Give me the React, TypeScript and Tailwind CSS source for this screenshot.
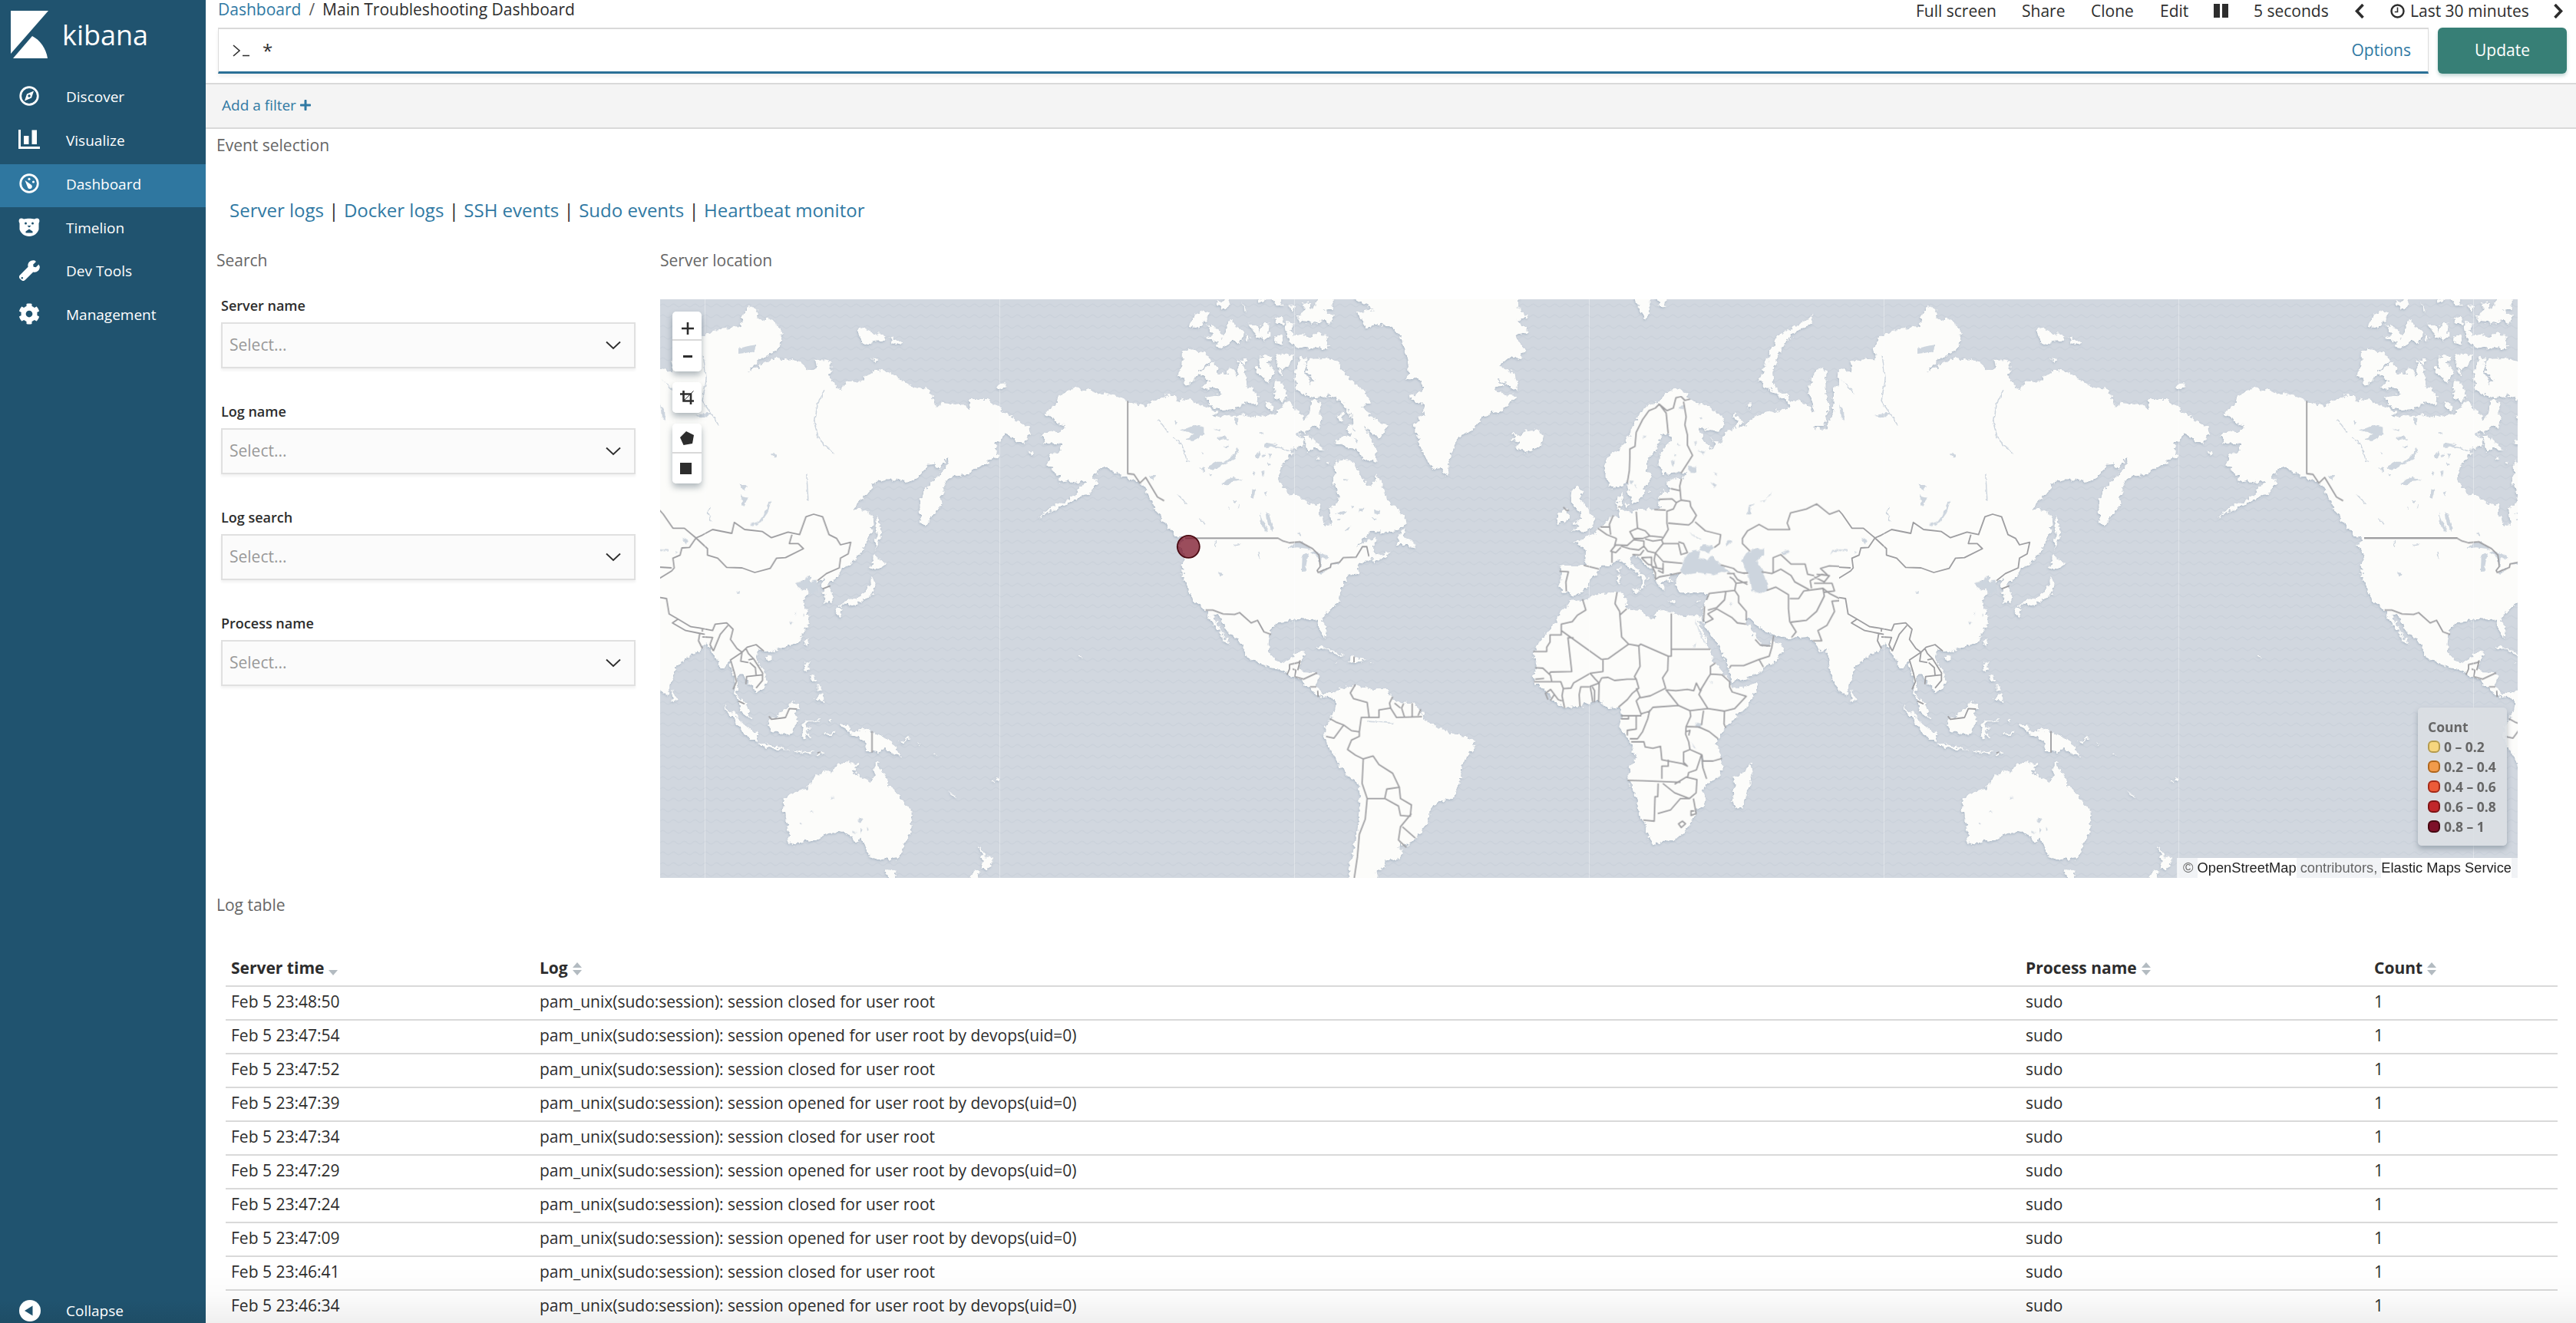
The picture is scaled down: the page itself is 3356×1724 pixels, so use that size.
import React from "react";
import { FaWrench, FaCog, FaPlus } from "react-icons/fa";

const T_A = "translate(0 -10) scale(0.5102 0.4911)";
const T_B = "translate(740 -10) scale(0.5102 0.4911)";
const T_N = "translate(620 0) scale(0.33333)";
const T_E = "translate(1120 110) scale(0.33333)";
const T_S = "translate(0 250) scale(0.33333)";

type Shape = { t: string; d: string };

/* Coastlines, each group in its own regional coordinate grid */
const LAND: Shape[] = [
  {
    t: T_A,
    d: `M1240,305L1195,290 1170,278 1145,272 1120,270 1100,262 1085,258 1075,265 1062,250 1045,262 1030,270 1015,280 1012,300 1000,312 983,318 990,328 1003,335 1010,350 1030,352 1037,363 1015,372 1000,368 985,375 970,382 985,388 980,402 1000,404 1025,402 1025,420 1015,430 1000,428 992,445 988,460 1003,465 1005,480 1020,488 1020,505 1045,500 1055,510 1075,500 1090,510 1070,520 1060,540 1035,555 1010,565 990,578 965,600 1000,582 1030,567 1060,554 1080,538 1096,535 1110,520 1115,500 1105,490 1120,475 1140,465 1160,480 1185,488 1205,492 1225,505 1240,525 1255,545 1265,565 1275,590 1285,610 1300,630 1320,650 1400,650 1400,340Z
M-40,200L10,205 30,215 30,185 60,178 95,180 88,150 104,120 135,105 163,98 205,92 212,55 235,38 250,55 245,75 290,72 302,95 314,115 305,145 285,165 250,185 225,215 270,187 300,178 330,180 355,185 385,210 400,200 395,178 435,185 440,210 430,225 445,245 460,262 475,240 510,240 530,220 550,205 600,220 615,235 640,250 690,260 698,285 710,310 715,292 770,300 790,310 790,285 835,285 870,310 900,335 945,365 948,378 925,395 935,405 910,395 880,375 870,395 850,400 862,420 860,440 830,455 805,470 785,485 750,490 730,500 725,520 718,545 715,570 700,590 675,625 665,600 663,560 670,535 690,510 715,485 740,450 735,440 710,470 700,457 680,460 660,490 640,505 610,500 560,500 540,520 515,550 495,575 520,580 540,595 542,620 535,650 515,690 490,720 470,732 460,735 455,755 430,775 430,785 443,800 440,820 420,825 420,800 410,785 420,760 400,770 380,775 385,755 365,765 345,780 360,790 385,795 370,810 365,825 378,850 380,880 370,900 355,925 330,940 300,948 270,958 250,950 245,975 265,1005 272,1035 265,1050 245,1065 240,1050 220,1030 205,1015 198,1020 200,1045 190,1060 205,1080 220,1095 230,1125 232,1135 208,1115 200,1085 188,1062 190,1040 185,1015 178,980 165,1000 150,1000 145,975 130,950 118,935 105,950 80,965 60,980 35,1005 30,1035 20,1070 5,1070 -10,1040 -40,1000Z
M32,1060L45,1080 40,1090 30,1085Z M505,100L520,95 545,110 570,112 575,128 550,130 525,145 510,125Z M585,120L620,135 610,142 595,138Z M540,175L560,182 550,190Z M860,245L885,243 880,257 862,255Z
M552,590L560,610 565,650 558,660 550,685 552,640Z M548,700L578,722 555,740 535,735Z M540,755L548,775 540,805 520,818 495,834 470,830 450,840 475,820 510,808 530,790 538,770Z M445,840L465,842 458,862 448,850Z M378,920L375,945 367,935Z M270,970L288,968 278,982Z M370,980L382,985 380,1005 370,1010 368,990Z M400,1075L418,1065 418,1090 392,1085Z M385,1015L400,1030 392,1035Z M404,1040L412,1055 402,1058Z M1068,963L1078,970 1070,974Z M938,424L955,428 950,433Z`,
  },
  {
    t: T_N,
    d: `M-60,400L0,415 30,425 50,410 75,395 100,385 130,370 150,385 170,400 180,380 185,400 205,390 225,400 250,415 275,420 295,430 320,445 300,455 330,460 370,455 395,455 425,450 450,460 490,458 520,455 545,450 560,430 575,410 600,400 620,430 645,445 655,475 675,455 685,400 700,390 725,410 715,435 728,470 720,500 690,500 665,520 630,520 660,545 650,575 615,580 610,605 585,625 568,660 558,690 560,720 580,735 590,765 620,760 650,780 685,800 715,805 720,850 745,885 765,880 755,815 790,795 795,765 775,730 778,690 775,640 800,625 830,625 850,645 870,670 885,700 905,730 930,725 940,685 960,715 975,755 985,790 1020,815 1050,845 1055,880 1030,900 980,910 915,912 885,940 865,970 900,945 940,930 935,950 920,965 940,1000 970,995 1000,985 970,1010 930,1030 925,1015 880,1030 865,1055 868,1070 830,1080 815,1110 800,1130 795,1170 800,1180 765,1205 740,1225 725,1255 740,1285 745,1320 730,1315 715,1290 712,1265 705,1250 680,1250 650,1245 625,1255 600,1255 560,1260 540,1275 525,1290 520,1330 517,1360 530,1395 555,1415 590,1420 605,1410 615,1385 650,1375 660,1385 645,1410 640,1440 650,1455 700,1458 712,1470 705,1510 715,1530 730,1545 760,1535 785,1550 780,1565 755,1550 735,1560 700,1540 680,1520 655,1495 620,1475 590,1465 560,1445 520,1440 460,1415 425,1395 422,1365 395,1330 360,1300 340,1270 325,1235 300,1225 310,1255 325,1285 345,1320 368,1350 345,1335 325,1300 305,1275 290,1250 275,1218 240,1190 225,1180 215,1155 205,1130 190,1105 183,1085 180,1050 190,1000 165,960 185,940 150,910 130,890 110,860 80,830 60,790 40,745 20,720 -10,705 -60,690Z
M180,200L215,195 270,210 295,240 260,265 240,300 200,340 185,310 162,300 178,260Z M245,290L290,250 310,250 320,290 355,290 365,265 385,280 400,310 395,240 420,260 430,300 440,340 480,380 470,410 430,405 400,425 340,435 300,420 270,385 340,370 320,345 265,350 255,340 290,320Z M408,233L430,235 425,260Z M460,265L485,270 480,225 510,220 530,225 515,250 540,280 530,310 510,325 490,300Z M550,215L615,215 600,260 570,275 550,265Z M545,320L570,320 595,380 575,400 540,380Z M555,275L572,280 565,305Z M510,400L540,420 530,432 508,425Z
M270,150L300,140 275,100 310,110 340,150 350,130 370,80 390,110 420,120 415,165 370,165 340,190 310,185 325,170Z M205,105L230,60 270,45 290,50 275,80 240,110 225,110Z M440,95L480,100 480,130 500,90 520,90 520,150 500,165 470,140Z M540,145L565,140 575,180 545,170Z M585,90L620,95 600,120 620,145 650,135 680,150 710,130 745,140 750,190 680,190 620,190 595,165Z M640,85L625,65 660,45 650,20 670,10 690,40 710,0 720,-10 770,-10 770,40 730,45 770,65 760,100 735,80 700,95Z M310,10L335,10 345,-10 355,-10 365,15 350,40 330,35Z M530,-10L570,-10 560,10 580,25 545,25Z M540,65L570,70 580,100 545,90Z M415,15L435,50 425,48Z M470,-5L505,-5 500,12 475,10Z M600,25L618,35 612,48Z M432,140L445,150 438,165Z
M640,230L665,225 660,280 680,330 700,320 670,285 665,250 690,230 740,228 785,238 800,270 830,310 855,330 890,350 915,400 885,420 930,465 985,495 955,545 920,520 890,500 920,545 940,590 940,640 890,620 860,590 820,575 775,560 800,540 840,530 820,510 845,490 840,450 800,400 760,375 700,385 650,370 625,350 620,290Z M665,530L690,545 720,575 740,590 700,585 670,600 660,570Z M785,455L810,445 808,475 790,480Z M700,622L722,612 715,628Z M745,632L757,636 750,642Z
M840,-10L930,40 860,50 900,110 960,95 1000,110 1030,140 1050,190 1065,260 1060,310 1110,310 1120,360 1070,375 1090,405 1120,400 1125,450 1085,490 1100,530 1110,580 1135,620 1165,665 1190,660 1215,690 1230,620 1245,560 1270,530 1320,510 1355,455 1420,440 1490,380 1430,370 1400,350 1440,340 1410,310 1480,350 1494,355 1480,290 1420,260 1460,225 1500,235 1520,200 1480,140 1540,130 1490,80 1535,70 1490,30 1500,-10Z
M1015,960L1035,910 1055,890 1045,930 1085,945 1090,975 1065,960Z M695,1365L730,1355 770,1375 820,1395 780,1390 740,1365Z M825,1415L850,1395 895,1410 860,1420Z M775,1418L792,1420 780,1424Z M913,1416L930,1419 915,1422Z`,
  },
  {
    t: T_B,
    d: `M725,370L745,385 755,370 790,365 808,385 795,410 765,425 735,415 745,400 720,395 735,388Z
M262,1075L285,1050 300,1052 320,1045 345,1050 375,1055 405,1055 415,1075 440,1090 470,1092 492,1108 503,1135 530,1155 560,1165 600,1180 628,1190 630,1210 612,1235 597,1255 593,1300 575,1345 545,1352 515,1372 512,1405 495,1430 475,1455 460,1470 435,1462 445,1490 435,1507 400,1510 402,1530 380,1535 378,1570 310,1600 305,1560 315,1500 330,1430 337,1340 332,1305 300,1280 280,1250 262,1215 247,1185 248,1160 255,1140 272,1115 275,1090Z
M875,815L905,822 930,808 960,800 995,797 1010,798 1012,815 1020,820 1015,838 1050,845 1065,860 1088,867 1092,850 1110,845 1135,852 1165,862 1195,858 1210,862 1213,885 1200,870 1215,905 1230,945 1235,970 1250,995 1262,1010 1285,1040 1290,1050 1320,1050 1348,1040 1345,1065 1325,1100 1300,1125 1270,1155 1255,1180 1245,1200 1258,1225 1262,1265 1255,1285 1225,1305 1210,1325 1218,1345 1215,1365 1195,1375 1185,1405 1165,1435 1140,1455 1110,1458 1085,1467 1075,1450 1060,1405 1045,1370 1040,1335 1020,1295 1025,1265 1040,1240 1030,1205 1020,1180 998,1155 1005,1130 1000,1105 970,1105 955,1090 940,1085 900,1100 860,1105 830,1085 810,1060 785,1040 778,1020 788,1000 780,960 800,920 825,890 840,870 845,850 870,830Z
M1335,1252L1340,1275 1325,1330 1312,1370 1295,1372 1288,1350 1295,1310 1290,1290 1315,1275Z
M1355,235L1370,200 1385,160 1400,120 1440,95 1490,65 1495,85 1450,105 1420,140 1405,170 1390,215 1395,255 1400,265 1370,255Z M1035,10L1075,10 1080,50 1065,75 1055,55Z M1090,10L1120,10 1115,45 1100,35Z`,
  },
  {
    t: T_E,
    d: `M1300,-50L1245,-45 1250,0 1222,20 1220,60 1228,85 1222,120 1205,150 1200,178 1170,180 1140,165 1190,165 1200,125 1215,90 1200,60 1195,0 1200,-50 1165,-60 1140,-20 1130,40 1145,70 1150,115 1120,80 1080,65 1045,70 980,20 950,0 960,-5 1000,20 1050,45 1055,100 1030,98 1000,105 960,115 920,125 885,160 860,165 870,150 840,110 835,125 850,155 830,185 815,180 785,215 790,235 760,225 740,205 765,235 750,255 735,240 715,215 700,170 740,180 780,185 798,165 790,130 750,95 700,75 670,65 650,55 665,40 610,15 570,40 540,75 500,85 480,105 450,150 430,200 400,245 350,280 330,320 335,360 350,400 375,408 405,395 420,385 425,430 440,465 460,465 485,430 490,400 520,370 495,345 495,300 530,260 550,215 560,198 590,200 595,220 565,245 545,280 545,330 560,355 600,350 655,348 640,365 580,375 575,395 590,410 580,430 565,415 545,435 540,470 555,485 530,492 500,490 465,490 450,500 420,502 400,495 395,480 405,430 385,445 378,470 390,500 385,520 355,520 335,545 305,565 290,590 250,600 240,612 210,612 245,635 258,660 255,710 220,708 180,708 155,715 165,740 155,790 165,815 185,815 200,830 240,820 265,795 275,765 310,730 315,710 345,710 365,700 390,690 405,700 430,725 460,740 478,770 465,800 490,790 490,765 505,765 470,735 440,705 430,680 460,670 480,700 530,740 530,770 555,800 570,810 555,775 600,770 575,760 590,745 630,740 615,760 610,785 630,820 670,820 700,820 735,818 725,850 715,880 712,900 725,935 720,940 745,980 780,1030 810,1090 825,1150 830,1165 870,1155 940,1130 960,1105 1000,1090 1035,1030 1000,1010 985,1000 985,1020 950,1025 920,990 900,950 885,925 900,915 920,940 960,970 1000,985 1060,995 1125,990 1160,1020 1180,1050 1200,1035 1205,1090 1225,1160 1260,1220 1300,1260Z
M205,405L225,400 245,420 235,450 265,490 290,530 285,560 260,572 205,578 230,560 210,545 240,525 235,500 205,470 200,440Z M150,510L185,480 190,520 180,540 145,550Z M408,465L430,468 420,482Z M380,750L393,745 392,775 382,780Z M383,725L392,720 390,740Z M435,805L468,800 462,818Z M575,845L605,848 600,856Z M685,856L708,846 695,862Z M890,80L905,75 905,95 893,97Z M505,412L512,425 507,430Z`,
  },
  {
    t: T_S,
    d: `M243,835L290,870 330,915 378,945 378,978 345,965 310,925 280,880Z M380,985L430,992 470,1005 510,1015 470,1012 400,1002Z M520,1015L600,1017 600,1022 525,1020Z M605,1034L645,1017 640,1024 615,1036Z M420,890L450,885 490,850 520,822 545,838 530,860 540,890 525,925 505,955 480,945 435,940 425,915Z M550,920L570,897 610,898 625,888 622,898 575,905 570,925 590,920 575,940 590,965 570,950 560,975 552,970 560,945Z M705,915L735,915 740,935 765,940 790,930 830,940 880,962 910,985 925,1015 950,1038 915,1030 880,1005 855,1020 800,1010 805,985 780,965 745,955 740,942 710,925Z M925,980L960,975 970,960 976,968 955,986Z
M482,1205L520,1180 575,1160 595,1130 640,1090 665,1105 685,1085 695,1065 730,1060 775,1068 757,1100 790,1120 820,1138 835,1120 838,1080 848,1048 860,1090 880,1105 890,1145 925,1180 950,1215 980,1245 988,1290 975,1340 955,1380 940,1425 895,1445 880,1432 860,1442 820,1425 800,1390 790,1360 765,1378 745,1345 705,1330 650,1340 605,1365 560,1368 525,1385 498,1370 508,1350 495,1300 485,1250Z
M878,1480L920,1482 915,1518 890,1518Z M1240,1382L1262,1410 1275,1430 1305,1430 1300,1450 1275,1485 1255,1475 1265,1440Z M1210,1518L1230,1480 1250,1490 1240,1518Z M1125,1172L1160,1196 1156,1199 1130,1180Z M1293,1135L1308,1133 1303,1142Z M1310,1128L1328,1116 1322,1128Z M1005,980L1018,990 1012,990Z M1068,1022L1082,1032 1070,1030Z M655,885L668,890 660,905Z M640,946L690,944 690,950 642,951Z`,
  },
];

const WATER: Shape[] = [
  {
    t: T_N,
    d: `M170,515L235,490 265,500 265,530 225,552 195,548 225,528 205,518Z M280,655L315,635 345,635 380,608 395,575 402,590 385,625 340,645 300,668Z M335,725L355,705 380,695 415,705 375,712 350,726Z M505,830L520,840 530,875 538,905 525,900 510,865Z M485,830L492,850 515,905 507,908 488,875Z M590,975L625,950 650,948 690,983 670,975 630,970Z M650,1000L665,992 675,998 668,1020 662,1065 648,1062Z M680,990L700,985 745,1000 755,1015 725,1010 722,1045 712,1030 710,1005Z M712,1070L760,1045 755,1054 722,1073Z M765,1036L798,1025 790,1035 768,1042Z M455,740L468,742 458,780 450,775Z M500,755L515,750 508,770Z M320,1068L340,1078 332,1084Z M780,835L810,828 825,830 800,842Z M868,815L892,815 888,830 872,832Z M930,822L955,825 945,842 932,838Z M920,855L945,858 930,865Z M815,905L838,885 830,905Z M630,915L645,912 642,924Z M305,510L330,505 328,516Z M315,540L350,535 360,548 325,548Z M340,575L360,572 356,585Z M465,610L485,595 480,625 468,620Z M505,560L555,568 540,578 500,578Z M480,518L498,522 485,528Z M812,702L832,704 818,709Z M50,690L75,685 72,705 58,700Z M375,785L395,790 382,796Z M395,808L405,800 402,818Z M740,410L770,420 760,432Z M380,460L400,465 396,495 388,485Z M150,475L162,480 155,492Z M850,540L868,552 862,560Z M845,500L862,515 856,518Z M630,520L655,545 622,528Z M490,608L502,604 500,618Z M515,605L528,600 525,625Z M490,675L502,672 498,696Z M458,672L470,678 460,690Z M510,640L528,645 520,652Z M255,598L268,602 262,608Z M250,658L270,660 264,676Z M282,685L298,684 290,694Z M360,815L368,812 366,824Z M785,860L800,858 795,866Z M840,805L852,806 845,815Z`,
  },
  {
    t: T_E,
    d: `M628,742L635,700 655,665 690,650 705,655 700,680 730,690 748,672 780,700 825,740 790,735 750,747 700,738 660,745Z M700,650L715,630 745,632 760,640 740,660Z M868,690L885,662 920,643 955,645 955,670 925,690 952,735 965,770 970,805 945,822 905,808 900,780 892,745 875,715Z M655,320L690,325 692,350 668,348Z M695,258L725,268 715,275Z M745,385L770,395 762,405Z M890,510L895,475 920,468 900,485 902,512Z M940,460L960,455 985,420 978,436 955,462Z M1020,660L1050,650 1055,660 1025,668Z M1212,670L1222,650 1300,650 1225,656Z M690,1325L710,1330 705,1345 685,1340Z M712,1450L718,1500 714,1500 708,1460Z M668,1400L690,1430 680,1425Z M430,378L445,380 440,392 432,392Z M760,350L772,350 765,358Z M685,915L692,940 720,1000 730,1020 720,1010 690,948Z M680,1020L690,1012 680,1036Z M815,615L830,612 815,632 805,632Z M620,95L640,85 638,100Z M660,580L710,608 706,611 665,585Z M590,305L602,300 600,325Z M615,232L628,240 620,246Z M600,275L612,280 606,288Z M680,225L692,228 690,240Z M700,130L715,132 708,140Z M478,205L492,210 484,216Z M450,400L456,392 456,408Z M820,850L830,865 825,870Z M745,1165L752,1168 748,1174Z`,
  },
  {
    t: T_S,
    d: `M350,130L385,120 410,85 425,38 433,42 420,85 395,120 365,136Z M590,400L570,380 540,375 528,360 560,350 575,332 590,335 580,355 605,350 610,345 620,390 590,400Z M298,392L312,393 310,402 300,400Z M0,228L36,230 36,235 0,234Z M60,232L72,240 62,240Z M88,182L108,195 98,208Z M668,1197L680,1199 670,1205Z M775,1275L788,1285 785,1298 776,1292Z M780,1315L792,1325 782,1336Z M750,1328L770,1335 755,1338Z M590,1250L600,1254 590,1257Z M808,1314L818,1318 810,1326Z M545,1295L558,1296 552,1304Z M505,510L518,515 510,526Z M318,40L332,45 328,60 318,55Z M525,480L530,476 532,484Z M560,482L566,486 560,490Z`,
  },
  {
    t: T_A,
    d: `M200,150L245,140 240,160 200,165Z M280,430L300,430 295,442Z M0,300L12,318 14,345 4,330Z M90,330L130,318 120,335Z M200,510L225,515 215,530Z M205,540L225,545 215,570Z M5,235L20,250 40,275 30,255Z M1425,742L1438,750 1432,756Z`,
  },
];

const RIVERS: Shape[] = [
  { t: T_A, d: "M420,262L400,300 393,345 405,390 445,432 M128,570L122,585 130,610 M374,485L378,555 M110,170L118,230 108,290 150,355" },
  { t: T_N, d: "M88,470L125,520 M145,540L180,570 198,630 210,635 M165,765L200,800 M250,860L270,880 M310,945L310,965 M385,962L410,958 M480,985L484,1015 M540,575L610,592" },
  { t: T_B, d: "M355,1140L420,1145" },
];

/* Country borders */
const BORDERS: Shape[] = [
  { t: T_A, d: "M1194,290L1194,483 1210,485 1225,508 1240,493 1270,545 1287,555" },
  {
    t: T_N,
    d: "M192,934L555,934 575,945 600,952 640,948 690,975 715,1000 720,1045 708,1060 712,1068 760,1048 762,1035 795,1028 810,1010 860,1008 885,967 902,967 910,1005 M272,1215L300,1215 340,1230 385,1232 405,1225 450,1265 475,1255 500,1300 528,1310 M590,1468L600,1445 600,1428 635,1420 642,1412 M612,1445L625,1450 620,1475 655,1485 708,1460 M642,1412L632,1450 M680,1515L705,1515 M710,1530L712,1555 M852,1397L852,1420",
  },
  {
    t: T_B,
    d: "M325,1042L312,1065 320,1080 355,1090 360,1130 340,1130 335,1168 335,1180 315,1190 305,1215 325,1230 345,1240 M260,1133L275,1142 295,1150 315,1165 335,1168 M295,1150L270,1185 250,1180 M345,1240L370,1232 385,1255 420,1278 437,1315 405,1320 400,1345 355,1345 342,1305 345,1240 M400,1345L435,1365 440,1390 465,1392 468,1362 440,1345 437,1315 M355,1345L350,1400 335,1440 330,1500 320,1570 M468,1385L440,1420 435,1455 455,1475 M445,1420L478,1450 M360,1130L385,1130 385,1110 415,1105 412,1092 420,1075 M415,1105L430,1130 495,1128 M440,1105L425,1092 M450,1128L443,1105 448,1093 M470,1128L470,1092 M485,1125L492,1108 M1020,1297L1060,1298 1155,1302 M1098,1305L1097,1340 1090,1340 1088,1405 1060,1402 M1097,1385L1130,1375 1155,1345 1178,1345 1195,1330 1197,1295 1170,1288 1140,1307 M1110,1305L1140,1330 1178,1345 M1188,1345L1195,1385 1182,1390 1182,1378 1190,1378 M1150,1412L1160,1405 1168,1412 1157,1422Z",
  },
  {
    t: T_E,
    d: `M245,842L258,885 225,905 205,930 162,940 162,982 118,982 118,1010 105,1030 105,1047 52,1047 M162,965L320,1078 M210,993L188,993 203,1125 120,1127 115,1135 M60,1110L90,1112 120,1140 125,1165 55,1165 M60,1155L95,1152 M380,815L372,860 390,890 398,990 425,1018 M390,905L418,880 M320,1078L345,1075 425,1018 465,1025 472,1018 580,1065 592,1065 592,898 M592,1038L745,1038 M465,1025L470,1105 448,1145 455,1155 M320,1150L345,1148 370,1160 420,1155 455,1155 465,1190 440,1210 420,1235 385,1265 M325,1078L325,1125 275,1132 210,1170 200,1190 170,1192 165,1220 175,1268 M235,1262L232,1215 238,1185 270,1185 310,1170 295,1155 275,1132 M275,1185L280,1210 285,1245 M292,1245L292,1200 283,1185 M310,1170L308,1245 M320,1150L310,1170 M125,1165L160,1165 170,1192 M110,1235L100,1210 120,1195 135,1215 150,1235 165,1240 M135,1215L120,1238 M455,1190L470,1225 455,1240 475,1295 M395,1298L475,1298 M580,1065L578,1120 558,1150 570,1190 510,1220 470,1228 M570,1195L620,1258 520,1265 508,1280 475,1290 M508,1275L500,1310 480,1360 460,1388 430,1388 M395,1310L425,1310 425,1300 M455,1300L455,1350 420,1355 420,1375 M575,1197L610,1200 655,1195 680,1200 690,1170 705,1200 735,1150 745,1135 790,1138 820,1165 820,1185 830,1205 885,1222 840,1270 800,1280 735,1270 700,1215 710,1195 M745,1135L745,1105 765,1092 M620,1258L665,1278 735,1270 M800,1280L798,1330 805,1345 M650,1340L700,1342 740,1360 775,1388 M665,1278L668,1300 650,1340 648,1370 660,1400 665,1430 640,1440 640,1480 655,1495 635,1485 555,1470 550,1418 520,1425 490,1420 485,1400 435,1400 M710,1335L718,1278 M650,1360L665,1355 660,1375 M665,1430L710,1450 715,1475 755,1475 790,1465 M580,1470L580,1495 555,1495 555,1545 M710,1450L700,1480 690,1510 M712,1450L715,1500 730,1545 M690,1510L660,1520 655,1540
M420,388L428,340 430,290 430,255 450,245 455,190 480,140 505,105 530,95 545,80 575,105 600,95 610,55 630,50 645,65 665,60 M545,80L572,115 580,195 M640,70L650,130 645,160 655,200 655,240 675,280 630,350 M632,372L625,400 630,455 665,460 668,480 690,515 675,540 660,552 580,545 M590,410L625,418 M545,452L595,450 612,465 630,455 M612,465L600,490 575,498 575,545 580,570 562,600 M525,492L570,494 M685,540L725,575 785,590 780,625 760,640 M455,500L460,565 430,578 445,605 480,605 508,595 490,575 460,565 M508,595L558,600 M490,607L520,615 555,610 562,600 M375,630L420,632 445,610 485,615 485,635 465,650 430,645 395,635 M375,630L355,655 375,660 395,640 M360,655L360,700 M378,605L370,635 M305,565L340,590 378,605 M365,515L350,550 355,590 M315,560L350,560 M485,635L500,655 530,662 560,625 555,612 M530,662L560,695 635,702 M560,625L620,625 630,668 655,660 640,625 620,618 M560,700L560,740 540,730 M585,748L630,738 M470,670L485,650 M440,668L470,670 M475,680L515,678 515,710 500,705 475,680 M515,710L530,740 530,765 545,755 585,748 M530,662L525,690 535,720 560,725 M535,720L520,715 M250,710L310,725 M155,733L190,735 180,775 182,812 M170,482L182,495 192,495 M385,482L392,480
M785,708L835,722 850,735 880,742 M810,742L840,742 M835,742L850,765 890,785 M870,740L892,740 M820,755L835,765 845,780 890,775 M845,780L840,808 740,820 730,845 M840,808L855,830 855,855 885,890 885,925 M805,815L800,845 770,875 735,885 M770,880L830,915 850,935 885,940 M770,880L735,900 755,920 725,935 M722,870L718,930 M820,1112L825,1102 875,1102 935,1078 975,1065 985,1030 992,985 M935,1078L952,1108 M980,1025L940,1022 920,1000 M965,808L1000,795 1050,825 1050,880 1055,930 1080,970 1062,992 M1055,840L1090,840 1110,810 1185,800 1190,830 1160,890 1120,925 1060,932 M1145,1005L1180,1005 1165,965 1200,945 1230,890 1220,850 1255,848 M945,735L985,742 1020,725 1060,750 1075,775 1130,805 M990,740L990,680 1020,668 1060,705 1115,705 1125,745 1150,750 M900,655L870,625 870,605 890,575 935,550 970,570 1055,570 1045,545 1058,505 1120,490 1160,470 1210,510 1250,495 M1140,800L1135,770 1180,745 1205,750 1175,722 1210,712 1260,715 M1150,780L1220,780 1230,810 1190,815 M1150,755L1190,775 1210,750 1160,745 M1185,800L1210,820 1250,840`,
  },
  {
    t: T_S,
    d: `M-4,72L12,90 50,145 95,145 140,183 165,172 205,150 280,165 290,122 330,150 400,158 435,182 500,160 545,170 570,100 600,90 635,100 660,170 690,185 705,210 745,200 735,245 705,262 700,300 650,322 615,350 M140,183L185,225 185,250 225,262 260,298 320,300 370,318 430,302 455,262 490,260 560,225 540,205 505,205 515,170 M140,183L115,220 85,222 78,250 50,262 55,300 45,312 -4,342 M-4,297L45,300 M-4,415L25,420 35,480 70,500 120,530 155,535 205,545 215,520 260,515 285,540 275,580 300,615 320,630 340,610 375,600 405,625 M70,500L48,515 100,545 150,555 175,560 M165,535L165,550 M155,555L150,585 165,615 M165,570L205,572 195,600 208,625 M208,625L235,560 265,525 M320,630L275,660 290,710 298,745 285,775 M320,630L315,665 345,670 M365,655L345,635 335,615 M350,670L372,690 375,718 M345,660L365,655 400,710 400,740 375,770 M335,755L338,725 400,718 M305,820L330,832 M425,880L435,892 490,885 505,850 535,852 M828,938L828,1022 M635,382L665,370 M615,1024L625,1020`,
  },
];

function Shapes({ items, ...rest }: { items: Shape[] } & React.SVGProps<SVGPathElement>) {
  return (
    <>
      {items.map((s, i) => (
        <path key={i} transform={s.t} d={s.d} vectorEffect="non-scaling-stroke" {...rest} />
      ))}
    </>
  );
}

function WorldMap() {
  return (
    <svg width="2420" height="754" viewBox="0 0 2420 754" className="block">
      <defs>
        <pattern id="waves" width="14" height="14" patternUnits="userSpaceOnUse">
          <rect width="14" height="14" fill="#d1d7df" />
          <path d="M0,8Q3.5,4.500 7,8T14,8" fill="none" stroke="#cbd2db" strokeWidth="1.2" />
        </pattern>
        <clipPath id="oneWorld">
          <rect x="0" y="0" width="1536" height="754" />
        </clipPath>
        <filter id="coast" filterUnits="userSpaceOnUse" x="-30" y="-12" width="1600" height="780">
          <feTurbulence type="fractalNoise" baseFrequency="0.16" numOctaves="3" seed="4" result="n" />
          <feDisplacementMap in="SourceGraphic" in2="n" scale="9" xChannelSelector="R" yChannelSelector="G" result="land" />
          <feDropShadow in="land" dx="-0.5" dy="1.5" stdDeviation="1" floodColor="#aab8c6" floodOpacity="0.9" />
        </filter>
        <filter id="rough" filterUnits="userSpaceOnUse" x="-30" y="-12" width="1600" height="780">
          <feTurbulence type="fractalNoise" baseFrequency="0.16" numOctaves="2" seed="4" result="n" />
          <feDisplacementMap in="SourceGraphic" in2="n" scale="5" xChannelSelector="R" yChannelSelector="G" />
        </filter>
        <g id="world" clipPath="url(#oneWorld)">
          <g filter="url(#coast)">
            <Shapes items={LAND} fill="#fcfcfa" />
          </g>
          <g filter="url(#rough)">
            <Shapes items={WATER} fill="#cdd5de" />
            <Shapes items={RIVERS} fill="none" stroke="#ccd4dd" strokeWidth="1.5" />
          </g>
          <Shapes items={BORDERS} fill="none" stroke="#9e9ea1" strokeWidth="1.8" strokeLinejoin="round" />
        </g>
      </defs>
      <rect width="2420" height="754" fill="url(#waves)" />
      <use href="#world" />
      <use href="#world" x="1536" />
      <path d="M58.500,0V754M442.500,0V754M826.500,0V754M1210.500,0V754M1594.500,0V754M1978.500,0V754M2362.500,0V754" stroke="#ffffff" strokeOpacity="0.35" />
      <circle cx="688.300" cy="322.300" r="14.500" fill="#7a1024" fillOpacity="0.74" stroke="#4a0a12" strokeWidth="1.800" />
    </svg>
  );
}

function KibanaMark() {
  return (
    <svg width="50" height="62" viewBox="0 0 50 62" fill="#fff">
      <path d="M0,0H49L0,56Z" />
      <path d="M28,33C38,38 46,49 48,62H3Z" />
    </svg>
  );
}

const IconDiscover = () => (
  <svg width="28" height="28" viewBox="0 0 28 28">
    <circle cx="14" cy="14" r="11.300" fill="none" stroke="#fff" strokeWidth="2.700" />
    <path fillRule="evenodd" fill="#fff" d="M20,7.500L17,16.500 8,20.500 11,11.500ZM14,12.300A1.700,1.700 0 1 0 14,15.700A1.700,1.700 0 1 0 14,12.300Z" />
  </svg>
);
const IconVisualize = () => (
  <svg width="28" height="26" viewBox="0 0 28 26" fill="#fff">
    <path d="M0,0H3V22H28V25H0Z" />
    <rect x="7" y="8" width="6.500" height="11" />
    <rect x="17.500" y="0.500" width="6.500" height="18.500" />
  </svg>
);
const IconDashboard = () => (
  <svg width="28" height="28" viewBox="0 0 28 28">
    <circle cx="14" cy="14" r="11.300" fill="none" stroke="#fff" strokeWidth="2.700" />
    <path d="M8.500,10L17,16A3,3 0 1 1 12,19Z" fill="#fff" />
    <circle cx="14" cy="8.300" r="1.600" fill="#fff" />
    <circle cx="19.500" cy="12" r="1.600" fill="#fff" />
  </svg>
);
const IconTimelion = () => (
  <svg width="28" height="24" viewBox="0 0 28 24">
    <path d="M1,2C2,0 5,0 7,1.500C11,0.500 17,0.500 21,1.500C23,0 26,0 27,2C28,4 27,6 26.500,7L26.500,15C25,20 20,24 14,24C8,24 3,20 1.500,15L1.500,7C1,6 0,4 1,2Z" fill="#fff" />
    <circle cx="9.500" cy="7" r="1.500" fill="#20536f" />
    <circle cx="18.500" cy="7" r="1.500" fill="#20536f" />
    <path d="M11.500,10H16.500L14,12.500ZM9.500,17.500L14,14.500 18.500,17.500V19.500H9.500Z" fill="#20536f" />
  </svg>
);

const NAV: { label: string; icon: React.ReactNode; active?: boolean }[] = [
  { label: "Discover", icon: <IconDiscover /> },
  { label: "Visualize", icon: <IconVisualize /> },
  { label: "Dashboard", icon: <IconDashboard />, active: true },
  { label: "Timelion", icon: <IconTimelion /> },
  { label: "Dev Tools", icon: <FaWrench className="size-[26px] -scale-x-100 -rotate-0" /> },
  { label: "Management", icon: <FaCog className="size-[28px]" /> },
];

function Wrench() {
  return (
    <svg width="27" height="27" viewBox="0 0 512 512" fill="#fff">
      <path
        transform="translate(512 0) scale(-1 1)"
        d="M18.940 136.550L27 105L99 177L158 167L168 109L96 37L126 9C172 -6 228 5 262 42C295 76 304 123 292 166L494 368C520 394 520 432 494 458L458 494C432 520 394 520 368 494L166 292C124 304 76 295 42 262C8 228 -4 180 9 136ZM440 416A24 24 0 1 0 440 464A24 24 0 1 0 440 416Z"
        fillRule="evenodd"
      />
    </svg>
  );
}
NAV[4].icon = <Wrench />;

function Sidebar() {
  return (
    <aside className="flex h-full w-[268px] shrink-0 flex-col bg-[#20536f] text-white">
      <div className="flex h-[100px] shrink-0 items-start pt-[14px] pl-[14px]">
        <KibanaMark />
        <span className="mt-[7px] ml-[17px] text-[36px] leading-[49px] font-medium">kibana</span>
      </div>
      <nav className="flex flex-col">
        {NAV.map((n) => (
          <a
            key={n.label}
            className={
              n.active
                ? "flex h-[56.8px] items-center bg-[#2f77a0] pb-[4px]"
                : "flex h-[56.8px] items-center pb-[4px]"
            }
          >
            <span className="mb-[2px] flex w-[76px] justify-center">{n.icon}</span>
            <span className="ml-[10px] text-[19px] font-medium">{n.label}</span>
          </a>
        ))}
      </nav>
      <div className="mt-auto flex h-[30px] shrink-0 items-center bg-gradient-to-b from-[#20536f] to-[#1e4d66] pb-[2px]">
        <svg width="28" height="28" viewBox="0 0 28 28" className="ml-[25px]">
          <circle cx="14" cy="14" r="14" fill="#fff" />
          <path d="M7,14L17.500,7.500V20.500Z" fill="#20536f" />
        </svg>
        <span className="ml-[33px] text-[19px] leading-[28px] font-medium">Collapse</span>
      </div>
    </aside>
  );
}

function TopBar() {
  return (
    <header className="flex h-[36px] shrink-0 items-start justify-between pr-[16px] pl-[16px] text-[21px] text-[#2d2d2d]">
      <div className="flex leading-[24px]">
        <span className="text-[#3079a3]">Dashboard</span>
        <span className="mx-[10px] text-[#5a5a5a]">/</span>
        <span>Main Troubleshooting Dashboard</span>
      </div>
      <div className="flex items-center leading-[28px]">
        <span className="w-[138px]">Full screen</span>
        <span className="w-[90px]">Share</span>
        <span className="w-[90px]">Clone</span>
        <span className="w-[70px]">Edit</span>
        <svg width="19" height="18" viewBox="0 0 19 18" fill="#2d2d2d">
          <rect width="8" height="18" />
          <rect x="11" width="8" height="18" />
        </svg>
        <span className="ml-[33px] w-[131px]">5 seconds</span>
        <svg width="14" height="19" viewBox="0 0 14 19" fill="none" stroke="#2d2d2d" strokeWidth="3.600">
          <path d="M11.500,1L3.500,9.500L11.500,18" />
        </svg>
        <svg width="19" height="19" viewBox="0 0 19 19" className="ml-[33px]" fill="none" stroke="#2d2d2d">
          <circle cx="9.500" cy="9.500" r="8" strokeWidth="2.400" />
          <path d="M9.500,4.500V10.500H5.800" strokeWidth="1.600" />
        </svg>
        <span className="ml-[7px] w-[186px]">Last 30 minutes</span>
        <svg width="14" height="19" viewBox="0 0 14 19" fill="none" stroke="#2d2d2d" strokeWidth="3.600">
          <path d="M2.500,1L10.500,9.500L2.500,18" />
        </svg>
      </div>
    </header>
  );
}

function QueryBar() {
  return (
    <div className="flex h-[72px] shrink-0 items-start gap-[12px] pr-[12px] pl-[16px] text-[21px]">
      <div className="flex h-[60px] grow items-center border-x border-t-2 border-b-[3px] border-x-[#dcdcdc] border-t-[#d9d9d9] border-b-[#2a6f96] bg-white shadow-[0_4px_5px_rgba(0,0,0,0.06)]">
        <svg width="24" height="18" viewBox="0 0 24 18" className="ml-[18px]" fill="none" stroke="#2d2d2d" strokeWidth="1.600">
          <path d="M1,2L9,9L1,16M13,15.500H22" />
        </svg>
        <span className="ml-[15px] grow text-[24px] text-[#2d2d2d]">*</span>
        <span className="mr-[22px] text-[#3079a3]">Options</span>
      </div>
      <button className="h-[60px] w-[168px] rounded-[6px] bg-[#377f76] text-[21px] font-medium text-white shadow-[0_3px_4px_rgba(55,127,118,0.3)]">
        Update
      </button>
    </div>
  );
}

const SELECTS = ["Server name", "Log name", "Log search", "Process name"];

function SearchPanel() {
  return (
    <section className="w-[578px] shrink-0">
      <h2 className="flex h-[44px] items-center text-[21px] text-[#666]">Search</h2>
      <div className="flex flex-col pt-[20px] pl-[6px]">
        {SELECTS.map((s) => (
          <div key={s} className="flex h-[138px] flex-col">
            <label className="flex h-[38px] items-center pb-[5px] text-[18px] font-semibold text-[#2d2d2d]">{s}</label>
            <div className="flex h-[60px] w-[540px] items-center justify-between border-2 border-[#e0e0e0] bg-[#fbfbfb] pr-[17px] pl-[9px] text-[21px] text-[#999] shadow-[0_3px_3px_rgba(0,0,0,0.05)]">
              <span>Select...</span>
              <svg width="20" height="12" viewBox="0 0 20 12" fill="none" stroke="#2d2d2d" strokeWidth="1.8">
                <path d="M1,1.500L10,10L19,1.500" />
              </svg>
            </div>
          </div>
        ))}
      </div>
    </section>
  );
}

const LEGEND = [
  { label: "0 – 0.2", box: "bg-[#f6d67e] border-[#b59b4d]" },
  { label: "0.2 – 0.4", box: "bg-[#f19b4b] border-[#b0661c]" },
  { label: "0.4 – 0.6", box: "bg-[#ec5b39] border-[#a52a18]" },
  { label: "0.6 – 0.8", box: "bg-[#c1272b] border-[#7f1315]" },
  { label: "0.8 – 1", box: "bg-[#7d1029] border-[#45060f]" },
];

const CTRL = "flex w-[38px] flex-col overflow-hidden rounded-[5px] bg-white";
const CTRL_SHADOW = "rounded-[5px] shadow-[0_5px_8px_rgba(60,80,95,0.4)]";

function MapPanel() {
  return (
    <section className="w-[2420px] shrink-0">
      <h2 className="flex h-[44px] items-center text-[21px] text-[#666]">Server location</h2>
      <div className="relative mt-[28px] h-[754px] w-[2420px] overflow-hidden">
        <WorldMap />
        <div className="absolute top-[16px] left-[16px] flex flex-col gap-[14px]">
          <div className={CTRL_SHADOW}>
            <div className={CTRL}>
              <div className="flex h-[38px] items-end justify-center border-b-2 border-[#d9d9d9] pb-[6px]">
                <svg width="16" height="16" viewBox="0 0 16 16" className="ml-[2px]" fill="#2d2d2d">
                  <path d="M6.700,0H9.300V6.700H16V9.300H9.300V16H6.700V9.300H0V6.700H6.700Z" />
                </svg>
              </div>
              <div className="flex h-[40px] items-center justify-center">
                <span className="ml-[2px] h-[3px] w-[12px] bg-[#2d2d2d]" />
              </div>
            </div>
          </div>
          <div className={CTRL_SHADOW}>
            <div className={CTRL}>
              <div className="flex h-[40px] items-center justify-center">
                <svg width="18" height="18" viewBox="0 0 18 18" fill="none" stroke="#2d2d2d" strokeWidth="2.600">
                  <path d="M0,4.500H14V18M4.500,0V13.500H18" />
                  <path d="M4,14L17.500,0.500" strokeWidth="1" />
                </svg>
              </div>
            </div>
          </div>
          <div className={CTRL_SHADOW}>
            <div className={CTRL}>
              <div className="flex h-[39px] items-center justify-center border-b-2 border-[#d9d9d9]">
                <svg width="18" height="18" viewBox="0 0 18 18" fill="#2d2d2d">
                  <path d="M8,0L18,5L16,16L4.500,18L0,8Z" />
                </svg>
              </div>
              <div className="flex h-[39px] items-center justify-center pr-[3px]">
                <span className="size-[15px] bg-[#2d2d2d]" />
              </div>
            </div>
          </div>
        </div>
        <div className="absolute top-[532px] right-[14px] flex h-[180px] w-[116px] flex-col rounded-[5px] bg-[#dadfe3]/90 pt-[12px] pl-[13px] text-[17.500px] leading-[26px] font-bold text-[#666] shadow-[0_4px_7px_rgba(60,80,95,0.35)]">
          <div>Count</div>
          {LEGEND.map((l) => (
            <div key={l.label} className="flex items-center whitespace-nowrap">
              <span className={"mr-[5px] size-[16px] rounded-[6px] border-2 " + l.box} />
              {l.label}
            </div>
          ))}
        </div>
        <div className="absolute right-0 bottom-0 flex h-[26px] items-center bg-white/70 px-[8px] font-['Liberation_Sans',sans-serif] text-[18.3px] leading-[26px] whitespace-pre text-[#666]">
          © <span className="bg-white text-[#222]">OpenStreetMap</span> contributors,{" "}
          <span className="bg-white text-[#222]">Elastic Maps Service</span>
        </div>
      </div>
    </section>
  );
}

const ROWS: [string, boolean][] = [
  ["23:48:50", false],
  ["23:47:54", true],
  ["23:47:52", false],
  ["23:47:39", true],
  ["23:47:34", false],
  ["23:47:29", true],
  ["23:47:24", false],
  ["23:47:09", true],
  ["23:46:41", false],
  ["23:46:34", true],
];

function Sort({ down }: { down?: boolean }) {
  return (
    <svg width="12" height="17" viewBox="0 0 12 17" className="ml-[6px]" fill="#b3bbc1">
      {!down && <path d="M6,0L12,7H0Z" />}
      <path d="M0,10H12L6,17Z" />
    </svg>
  );
}

const COLS = "grid grid-cols-[402px_1936px_454px_1fr] border-b-2 border-[#d9d9d9] pl-[7px]";

function LogTable() {
  return (
    <section>
      <h2 className="flex h-[44px] items-center text-[21px] text-[#666]">Log table</h2>
      <div className="mt-[38px] ml-[12px] w-[3038px] text-[21px] text-[#2d2d2d]">
        <div className={COLS + " h-[46px] font-bold"}>
          <div className="flex items-center">Server time<Sort down /></div>
          <div className="flex items-center">Log<Sort /></div>
          <div className="flex items-center">Process name<Sort /></div>
          <div className="flex items-center">Count<Sort /></div>
        </div>
        {ROWS.map(([t, opened]) => (
          <div key={t} className={COLS + " h-[44px] pb-[2px]"}>
            <div className="flex items-center">Feb 5 {t}</div>
            <div className="flex items-center">
              {opened
                ? "pam_unix(sudo:session): session opened for user root by devops(uid=0)"
                : "pam_unix(sudo:session): session closed for user root"}
            </div>
            <div className="flex items-center">sudo</div>
            <div className="flex items-center">1</div>
          </div>
        ))}
      </div>
    </section>
  );
}

const LINKS = ["Server logs", "Docker logs", "SSH events", "Sudo events", "Heartbeat monitor"];

export default function App() {
  return (
    <div className="relative flex h-[1724px] w-[3356px] overflow-hidden bg-white font-['Open_Sans',sans-serif]">
      <Sidebar />
      <main className="flex min-w-0 grow flex-col">
        <TopBar />
        <QueryBar />
        <div className="flex h-[60px] shrink-0 items-center border-y-2 border-[#d9d9d9] bg-[#f4f4f4] pb-[2px] pl-[21px] text-[19px] text-[#3079a3]">
          Add a filter
          <FaPlus className="ml-[4px] size-[16px]" />
        </div>
        <div className="flex flex-col pl-[14px]">
          <h2 className="flex h-[44px] items-center text-[21px] text-[#666]">Event selection</h2>
          <div className="flex h-[106px] pt-[44px] pl-[17px] text-[24px] leading-[36px] text-[#2d2d2d]">
            {LINKS.map((l, i) => (
              <React.Fragment key={l}>
                {i > 0 && <span className="mx-[6.4px]">|</span>}
                <a className="text-[#3079a3]">{l}</a>
              </React.Fragment>
            ))}
          </div>
          <div className="flex h-[840px]">
            <SearchPanel />
            <MapPanel />
          </div>
          <LogTable />
        </div>
      </main>
      <div className="pointer-events-none absolute right-0 bottom-0 left-[268px] h-[74px] bg-gradient-to-b from-transparent via-black/[0.015] to-black/[0.06]" />
    </div>
  );
}
